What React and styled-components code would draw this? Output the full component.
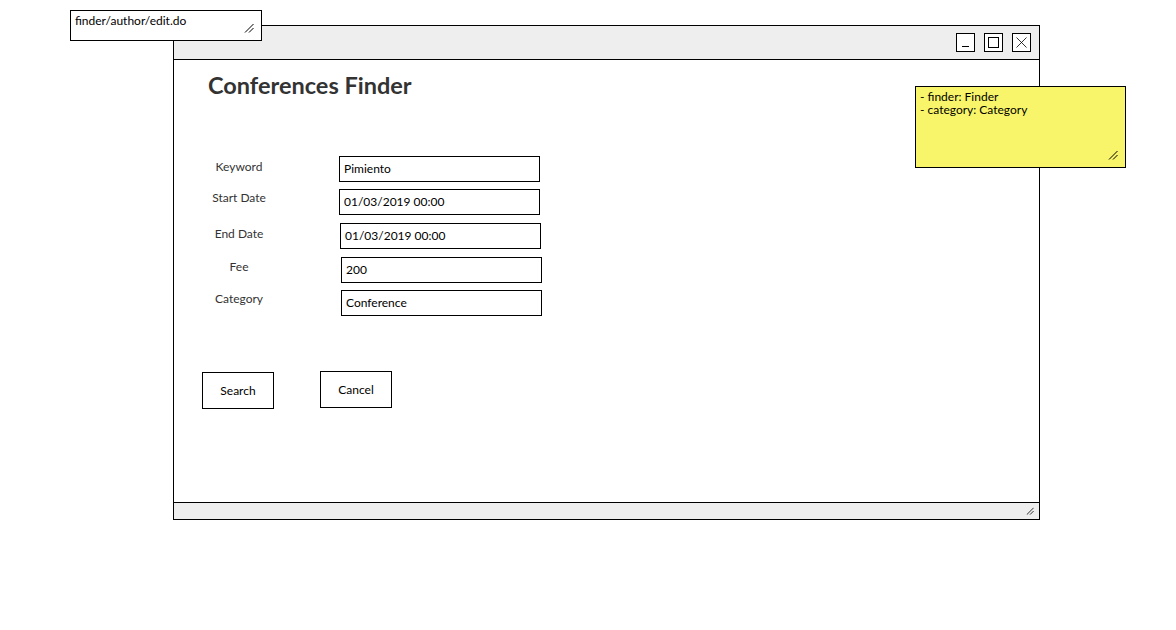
import React from "react";
import styled, { createGlobalStyle } from "styled-components";

const GlobalStyle = createGlobalStyle`
  html, body {
    margin: 0;
    padding: 0;
    background: #fff;
  }
  body {
    font-family: Lato, "Open Sans", sans-serif;
    color: #000;
  }
`;

const Canvas = styled.div`
  position: relative;
  width: 1176px;
  height: 630px;
  padding: 25px 0 0 173px;
  box-sizing: border-box;
  overflow: hidden;
`;

const Window = styled.div`
  width: 867px;
  height: 495px;
  border: 1px solid #000;
  box-sizing: border-box;
  display: flex;
  flex-direction: column;
  background: #fff;
`;

const TitleBar = styled.div`
  height: 34px;
  box-sizing: border-box;
  background: #eeeeee;
  border-bottom: 1px solid #000;
  display: flex;
  justify-content: flex-end;
  align-items: flex-start;
  gap: 9px;
  padding: 7px 8px 0 0;
`;

const Control = styled.div`
  width: 19px;
  height: 19px;
  box-sizing: border-box;
  border: 1px solid #000;
  background: #fff;
  display: flex;
  align-items: center;
  justify-content: center;

  svg {
    display: block;
  }
`;

const Body = styled.div`
  flex: 1;
  display: flex;
  flex-direction: column;
`;

const Heading = styled.h1`
  margin: 11px 0 0 34px;
  font-size: 23.5px;
  line-height: 28px;
  font-weight: 700;
  color: #333;
`;

const Form = styled.div`
  display: flex;
  flex-direction: column;
  margin-top: 57px;
`;

const Row = styled.div`
  display: flex;
  align-items: flex-start;
  height: 26px;
  margin-top: ${(p) => p.$gap || 0}px;
`;

const Label = styled.div`
  width: 78px;
  margin-left: 26px;
  padding-top: ${(p) => p.$drop}px;
  text-align: center;
  font-size: 12px;
  line-height: 14px;
  color: #333;
`;

const Field = styled.div`
  width: 201px;
  height: 26px;
  box-sizing: border-box;
  margin-left: ${(p) => 61 + (p.$shift || 0)}px;
  border: 1px solid #000;
  padding: 0 4px 1px;
  display: flex;
  align-items: center;
  font-size: 12px;
  background: #fff;
`;

const ButtonRow = styled.div`
  display: flex;
  align-items: flex-start;
  gap: 46px;
  margin: 56px 0 0 28px;
`;

const Button = styled.div`
  width: 72px;
  height: 37px;
  box-sizing: border-box;
  margin-top: ${(p) => (p.$lift ? -1 : 0)}px;
  border: 1px solid #000;
  display: flex;
  align-items: center;
  justify-content: center;
  font-size: 12px;
  background: #fff;
`;

const StatusBar = styled.div`
  height: 17px;
  box-sizing: border-box;
  background: #eeeeee;
  border-top: 1px solid #000;
  display: flex;
  justify-content: flex-end;
  align-items: center;
  padding-right: 5px;
`;

const Note = styled.div`
  position: absolute;
  left: ${(p) => p.$x}px;
  top: ${(p) => p.$y}px;
  width: ${(p) => p.$w}px;
  height: ${(p) => p.$h}px;
  box-sizing: border-box;
  border: 1px solid #000;
  background: ${(p) => p.$bg || "#fff"};
  padding: 3px 4px;
  font-size: 12px;
  line-height: 13px;
  color: #000;
`;

const NoteLine = styled.div`
  white-space: nowrap;
`;

const NoteGrip = styled.div`
  position: absolute;
  right: 7px;
  bottom: 7px;
  line-height: 0;
`;

const Grip = ({ size = 10 }) => (
  <svg width={size} height={size} viewBox="0 0 10 10" fill="none" stroke="#000" strokeWidth="1">
    <line x1="1" y1="9.5" x2="9.5" y2="1" />
    <line x1="5" y1="9.5" x2="9.5" y2="5" />
  </svg>
);

const fields = [
  { label: "Keyword", value: "Pimiento", gap: 0, drop: 4, shift: 0 },
  { label: "Start Date", value: "01/03/2019 00:00", gap: 7, drop: 2, shift: 0 },
  { label: "End Date", value: "01/03/2019 00:00", gap: 8, drop: 4, shift: 1 },
  { label: "Fee", value: "200", gap: 8, drop: 3, shift: 2 },
  { label: "Category", value: "Conference", gap: 7, drop: 2, shift: 2 },
];

export default function App() {
  return (
    <>
      <GlobalStyle />
      <Canvas>
        <Window>
          <TitleBar>
            <Control>
              <svg width="17" height="17" viewBox="0 0 17 17">
                <line x1="5" y1="12.5" x2="12" y2="12.5" stroke="#000" />
              </svg>
            </Control>
            <Control>
              <svg width="17" height="17" viewBox="0 0 17 17">
                <rect x="3.5" y="3.5" width="10" height="10" fill="none" stroke="#000" />
              </svg>
            </Control>
            <Control>
              <svg width="17" height="17" viewBox="0 0 17 17">
                <path d="M3.5 3.5 L13.5 13.5 M13.5 3.5 L3.5 13.5" stroke="#000" strokeWidth="0.8" />
              </svg>
            </Control>
          </TitleBar>
          <Body>
            <Heading>Conferences Finder</Heading>
            <Form>
              {fields.map((f) => (
                <Row key={f.label} $gap={f.gap}>
                  <Label $drop={f.drop}>{f.label}</Label>
                  <Field $shift={f.shift}>{f.value}</Field>
                </Row>
              ))}
            </Form>
            <ButtonRow>
              <Button>Search</Button>
              <Button $lift>Cancel</Button>
            </ButtonRow>
          </Body>
          <StatusBar>
            <Grip size={8} />
          </StatusBar>
        </Window>

        <Note $x={70} $y={10} $w={192} $h={31}>
          <NoteLine>finder/author/edit.do</NoteLine>
          <NoteGrip>
            <Grip />
          </NoteGrip>
        </Note>

        <Note $x={915} $y={86} $w={211} $h={82} $bg="#f9f56a">
          <NoteLine>- finder: Finder</NoteLine>
          <NoteLine>- category: Category</NoteLine>
          <NoteGrip>
            <Grip />
          </NoteGrip>
        </Note>
      </Canvas>
    </>
  );
}
